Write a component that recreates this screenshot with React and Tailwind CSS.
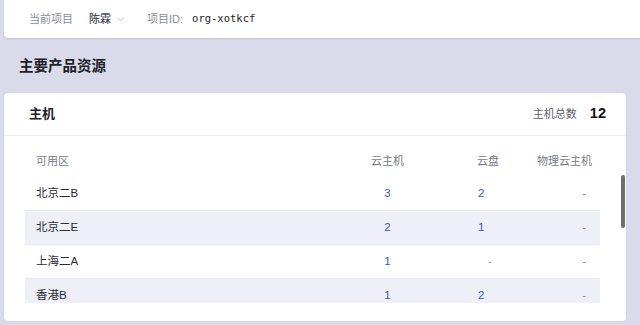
import React from "react";
import { ChevronDown } from "lucide-react";

const rows = [
  { zone: "北京二B", vm: "3", disk: "2", phy: "-" },
  { zone: "北京二E", vm: "2", disk: "1", phy: "-" },
  { zone: "上海二A", vm: "1", disk: "-", phy: "-" },
  { zone: "香港B", vm: "1", disk: "2", phy: "-" },
];

export default function App() {
  return (
    <div className="w-[640px] h-[325px] overflow-hidden bg-[#d9dbea] font-['Liberation_Sans','Noto_Sans_CJK_SC',sans-serif] text-[11.5px]">
      {/* top bar */}
      <div className="ml-[4px] h-[38px] bg-white rounded-bl-[4px] shadow-[0_1px_2px_rgba(0,0,0,0.12)] flex items-center pl-[25px] text-[11px]">
        <span className="text-[#8a8d99]">当前项目</span>
        <span className="ml-[16px] text-[#4a4d59] font-medium flex items-center">
          陈霖
          <ChevronDown size={11} strokeWidth={1.5} className="ml-[4px] text-[#9a9ca8]" />
        </span>
        <span className="ml-[21px] text-[#8a8d99]">项目ID:</span>
        <span className="ml-[9px] font-['DejaVu_Sans_Mono',monospace] text-[10.5px] text-[#222]">org-xotkcf</span>
      </div>

      {/* section title */}
      <div className="h-[55px] flex items-center pl-[19px] pt-[2px]">
        <span className="text-[14.5px] font-bold text-[#1f2129]">主要产品资源</span>
      </div>

      {/* card */}
      <div className="relative ml-[4px] w-[622px] h-[228px] bg-white rounded-[4px] shadow-[0_0_0_1px_rgba(200,203,220,0.5)] overflow-hidden">
        <div className="h-[43px] flex items-center justify-between pl-[25px] pr-[20px] border-b border-[#eceef4]">
          <span className="text-[13px] font-bold text-[#1f2129]">主机</span>
          <div className="flex items-center">
            <span className="text-[#5d606c] text-[11px]">主机总数</span>
            <span className="ml-[13px] text-[14.5px] font-bold text-[#111]">12</span>
          </div>
        </div>
        <div className="h-[167px] overflow-hidden pt-[9px] pl-[21px]">
          <div className="w-[575px]">
            <div className="grid grid-cols-[315px_95px_95px_70px] h-[32px] items-center text-[#777a86] text-[11px]">
              <div className="pl-[11px]">可用区</div>
              <div className="text-center">云主机</div>
              <div className="pl-[42px]">云盘</div>
              <div className="text-right pr-[8px]">物理云主机</div>
            </div>
            {rows.map((r, i) => (
              <div
                key={r.zone}
                className={`grid grid-cols-[315px_95px_95px_70px] h-[34px] items-center border-b border-[#e6e8f1] ${i % 2 === 1 ? "bg-[#eff0f7]" : "bg-white"}`}
              >
                <div className="pl-[11px] text-[#2a2c35]">{r.zone}</div>
                <div className="text-center text-[#3858b4]">{r.vm}</div>
                {r.disk === "-" ? (
                  <div className="pl-[53px] text-[#8a8d99]">-</div>
                ) : (
                  <div className="pl-[43px] text-[#3858b4]">{r.disk}</div>
                )}
                <div className="text-right pr-[14px] text-[#8a8d99]">{r.phy}</div>
              </div>
            ))}
          </div>
        </div>
        {/* overlay scrollbar */}
        <div className="absolute right-[1px] top-[82px] w-[4px] h-[53px] rounded-full bg-[#6e6e70]" />
      </div>
    </div>
  );
}
